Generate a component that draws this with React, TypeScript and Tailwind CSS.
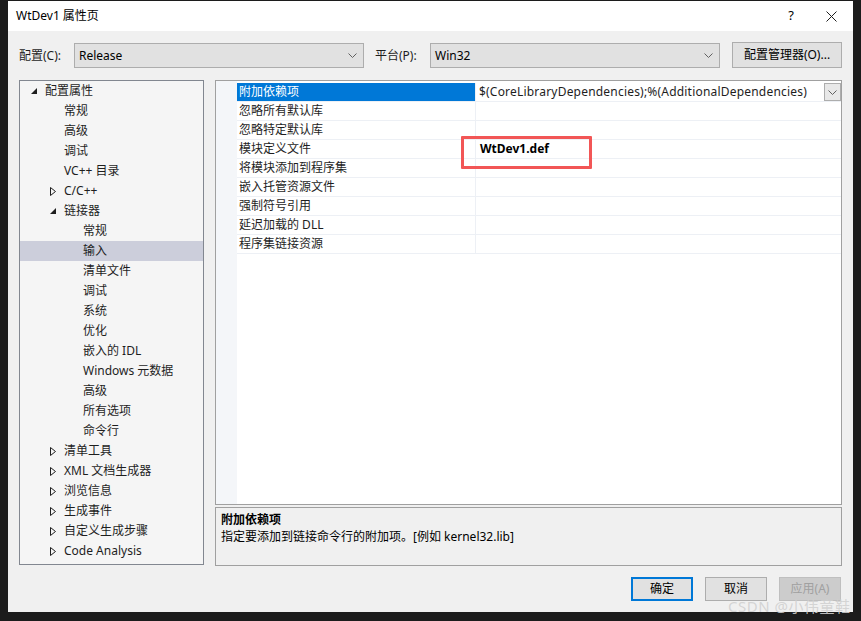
import React from "react";

const font = { fontFamily: '"Noto Sans", "Noto Sans CJK SC", sans-serif' };

function Chevron() {
    return <svg width="9" height="5" viewBox="0 0 9 5" className="shrink-0">
        <path d="M0.5 0.5 L4.5 4.5 L8.5 0.5" fill="none" stroke="#606060" strokeWidth="1" />
    </svg>
}

function Select({ value }: { value: string }) {
    return <div className="w-[290px] h-[25px] bg-[#e1e1e1] border border-[#adadad] flex items-center justify-between pl-[4px] pr-[6px] text-[12px] text-black">
        <span>{value}</span>
        <Chevron />
    </div>
}

function Arrow({ open }: { open: boolean }) {
    if (open) {
        return <svg width="6" height="6" viewBox="0 0 6 6"><path d="M6 0 L6 6 L0 6 Z" fill="#1e1e1e" /></svg>
    }
    return <svg width="6" height="9" viewBox="0 0 6 9"><path d="M0.5 0.5 L5.5 4.5 L0.5 8.5 Z" fill="none" stroke="#1e1e1e" strokeWidth="1" /></svg>
}

type TreeItem = { label: string; level: number; arrow?: "open" | "closed"; selected?: boolean }

const tree: TreeItem[] = [
    { label: "配置属性", level: 0, arrow: "open" },
    { label: "常规", level: 1 },
    { label: "高级", level: 1 },
    { label: "调试", level: 1 },
    { label: "VC++ 目录", level: 1 },
    { label: "C/C++", level: 1, arrow: "closed" },
    { label: "链接器", level: 1, arrow: "open" },
    { label: "常规", level: 2 },
    { label: "输入", level: 2, selected: true },
    { label: "清单文件", level: 2 },
    { label: "调试", level: 2 },
    { label: "系统", level: 2 },
    { label: "优化", level: 2 },
    { label: "嵌入的 IDL", level: 2 },
    { label: "Windows 元数据", level: 2 },
    { label: "高级", level: 2 },
    { label: "所有选项", level: 2 },
    { label: "命令行", level: 2 },
    { label: "清单工具", level: 1, arrow: "closed" },
    { label: "XML 文档生成器", level: 1, arrow: "closed" },
    { label: "浏览信息", level: 1, arrow: "closed" },
    { label: "生成事件", level: 1, arrow: "closed" },
    { label: "自定义生成步骤", level: 1, arrow: "closed" },
    { label: "Code Analysis", level: 1, arrow: "closed" },
]

const props = [
    "附加依赖项",
    "忽略所有默认库",
    "忽略特定默认库",
    "模块定义文件",
    "将模块添加到程序集",
    "嵌入托管资源文件",
    "强制符号引用",
    "延迟加载的 DLL",
    "程序集链接资源",
]

export default function App() {
    return <div style={font} className="relative w-[861px] h-[621px] bg-[#1c1c1c] pl-[8px] pt-[1px]">
        <div className="w-[845px] h-[611px] flex flex-col">
            <div className="h-[30px] bg-white flex items-center justify-between pl-[8px] pr-[16px] text-[12px] text-black">
                <span>WtDev1 属性页</span>
                <div className="flex items-center gap-[32px]">
                    <span className="text-[13px]">?</span>
                    <svg width="11" height="11" viewBox="0 0 11 11"><path d="M0.5 0.5 L10.5 10.5 M10.5 0.5 L0.5 10.5" stroke="#1e1e1e" strokeWidth="1" /></svg>
                </div>
            </div>
            <div className="flex-1 bg-[#f0f0f0] flex flex-col text-[12px] text-[#1e1e1e]">
                <div className="flex items-center h-[25px] mt-[12px] pl-[11px]">
                    <span className="w-[55px]">配置(C):</span>
                    <Select value="Release" />
                    <span className="ml-[11px] w-[55px]">平台(P):</span>
                    <Select value="Win32" />
                    <button className="ml-[12px] w-[110px] h-[26px] bg-[#e1e1e1] border border-[#adadad] text-[12px] text-black -mt-[1px]">配置管理器(O)...</button>
                </div>
                <div className="flex mt-[12px] pl-[11px] gap-[11px]">
                    <div className="w-[185px] h-[485px] bg-[#f5f5f5] border border-[#828790]">
                        {tree.map((t, i) => (
                            <div key={i} className={`h-[20px] flex items-center ${t.selected ? "bg-[#cccedb]" : ""}`}>
                                <div className="flex items-center" style={{ paddingLeft: 11 + t.level * 19 }}>
                                    <div className="w-[14px] flex items-center">
                                        {t.arrow && <Arrow open={t.arrow === "open"} />}
                                    </div>
                                    <span>{t.label}</span>
                                </div>
                            </div>
                        ))}
                    </div>
                    <div className="w-[627px] flex flex-col">
                        <div className="relative h-[425px] bg-white border border-[#a0a0a0] flex">
                            <div className="w-[21px] bg-[#f4f6f9]" />
                            <div className="flex-1 flex flex-col pt-[2px]">
                                {props.map((p, i) => (
                                    <div key={i} className="h-[19px] flex border-b border-[#edf0f5]">
                                        <div className={`w-[239px] flex items-center pl-[2px] border-r border-[#edf0f5] ${i === 0 ? "bg-[#0078d7] text-white" : ""}`}>{p}</div>
                                        <div className="flex-1 flex items-center justify-between pl-[3px]">
                                            {i === 0 && <span className="tracking-[0.2px]">$(CoreLibraryDependencies);%(AdditionalDependencies)</span>}
                                            {i === 3 && <span className="font-bold text-black ml-[1px]">WtDev1.def</span>}
                                            {i === 0 && <div className="w-[17px] h-[18px] bg-[#e8e8e8] border border-[#adadad] flex items-center justify-center"><Chevron /></div>}
                                        </div>
                                    </div>
                                ))}
                            </div>
                            <div className="absolute left-[245px] top-[55px] w-[131px] h-[33px] border-[3px] border-[#f25656] rounded-[1px]" />
                        </div>
                        <div className="mt-[2px] h-[59px] border border-[#a0a0a0] bg-[#f0f0f0] px-[5px] pt-[3px] leading-[17px]">
                            <div className="font-bold text-black">附加依赖项</div>
                            <div className="text-black">指定要添加到链接命令行的附加项。[例如 kernel32.lib]</div>
                        </div>
                    </div>
                </div>
                <div className="flex justify-end gap-[12px] pr-[12px] mt-[11px]">
                    <button className="w-[62px] h-[24px] bg-[#e1e1e1] border-2 border-[#0078d7] text-black text-[12px]">确定</button>
                    <button className="w-[62px] h-[24px] bg-[#e1e1e1] border border-[#adadad] text-black text-[12px]">取消</button>
                    <button className="w-[62px] h-[24px] bg-[#cccccc] border border-[#bfbfbf] text-[#a0a0a0] text-[12px]">应用(A)</button>
                </div>
            </div>
        </div>
        <div className="absolute left-[728px] top-[595px] text-[15px] text-[#d0d0d0]/90 tracking-[0.5px]">CSDN @小伟童鞋</div>
    </div>
}
